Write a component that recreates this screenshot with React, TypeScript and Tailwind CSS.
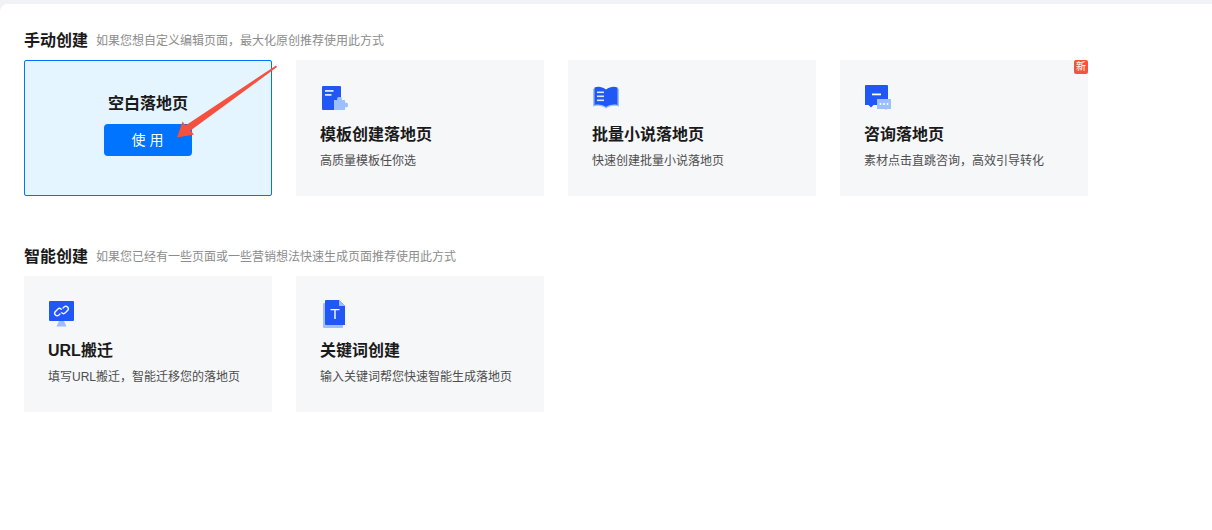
const font = { fontFamily: '"Liberation Sans","Noto Sans CJK SC",sans-serif' };

function IconTemplate() {
  return (
    <svg width="28" height="28" viewBox="0 0 28 28" className="block overflow-visible">
      <rect x="2" y="1" width="19" height="24" rx="1" fill="#2158f5" />
      <rect x="5" y="5" width="8.500" height="1.800" fill="#dbe6ff" />
      <rect x="5" y="9" width="6.500" height="1.800" fill="#dbe6ff" />
      <g fill="#9cc0ff">
        <rect x="14" y="15" width="11" height="10" />
        <rect x="17" y="12" width="5" height="4" rx="2" />
        <rect x="24" y="17.500" width="4" height="5" rx="2" />
      </g>
    </svg>
  );
}
function IconBook() {
  return (
    <svg width="28" height="26" viewBox="0 0 28 26" className="block overflow-visible">
      <path d="M1 4C5 2 9 2.500 14 5.500 19 2.500 23 2 27 4V21.500C22 20 18 20.500 14 23.500 10 20.500 6 20 1 21.500Z" fill="#9cc0ff" />
      <path d="M2.500 2.500C6 1 10 1.500 14 4.500 18 1.500 22 1 25.500 2.500V20C22 19 18 19.500 14 22 10 19.500 6 19 2.500 20Z" fill="#2158f5" />
      <rect x="5" y="6.500" width="7" height="1.600" fill="#dbe6ff" />
      <rect x="5" y="10.500" width="7" height="1.600" fill="#dbe6ff" />
      <rect x="5" y="14.500" width="7" height="1.600" fill="#dbe6ff" />
    </svg>
  );
}
function IconChat() {
  return (
    <svg width="28" height="26" viewBox="0 0 28 26" className="block overflow-visible">
      <path d="M2 0h21a1 1 0 0 1 1 1v19H9.500L7 22.500 4.500 20H1V1a1 1 0 0 1 1-1Z" fill="#2158f5" />
      <rect x="8" y="8.500" width="9" height="1.800" fill="#fff" />
      <path d="M13 14h14v10h-4l-1 1-1-1h-8Z" fill="#9cc0ff" />
      <circle cx="16.500" cy="19" r="1" fill="#fff" />
      <circle cx="20" cy="19" r="1" fill="#fff" />
      <circle cx="23.500" cy="19" r="1" fill="#fff" />
    </svg>
  );
}
function IconLink() {
  return (
    <svg width="28" height="28" viewBox="0 0 28 28" className="block overflow-visible">
      <path d="M11 20h5l2.500 5.500H8.500Z" fill="#9cc0ff" />
      <rect x="1" y="0" width="25" height="20" rx="1" fill="#2158f5" />
      <g fill="none" stroke="#f2f6ff" strokeWidth="1.400" strokeLinecap="round">
        <path d="M12 13l-1.300 1.200a2.500 2.500 0 0 1-3.500-3.500L9.700 8.200a2.500 2.500 0 0 1 3.500 0" />
        <path d="M15 7l1.300-1.200a2.500 2.500 0 0 1 3.500 3.500L17.300 11.800a2.500 2.500 0 0 1-3.500 0" />
      </g>
    </svg>
  );
}
function IconDoc() {
  return (
    <svg width="28" height="28" viewBox="0 0 28 28" className="block overflow-visible">
      <rect x="3" y="2" width="20" height="25" rx="1" fill="#9cc0ff" />
      <path d="M6 -1h13l6 6v19H6a1 1 0 0 1-1-1V0a1 1 0 0 1 1-1Z" fill="#2158f5" />
      <path d="M19 -1l6 6h-6Z" fill="#9cc0ff" />
      <path d="M10.500 8h9v1.300h-3.800V18h-1.400V9.300h-3.800Z" fill="#fff" />
    </svg>
  );
}

function Card({ icon, title, desc, badge }: { icon: React.ReactNode; title: string; desc: string; badge?: boolean }) {
  return (
    <div className="relative flex h-[136px] w-[248px] flex-col bg-[#f6f7f9] px-6 pt-[25px]">
      {badge && (
        <span className="absolute right-0 top-0 flex h-[14px] w-[14px] items-center justify-center rounded-[2px] bg-[#f9523b] text-[10px] leading-none text-white">
          新
        </span>
      )}
      <div className="h-7">{icon}</div>
      <div className="mt-[10px] text-base font-bold leading-[24px] text-[#1a1a1a]">{title}</div>
      <div className="mt-[4px] text-xs leading-[20px] text-[#4d4d4d]">{desc}</div>
    </div>
  );
}

function Heading({ title, desc }: { title: string; desc: string }) {
  return (
    <div className="flex h-10 items-center gap-2 pt-[1px]">
      <span className="text-base font-bold text-[#1a1a1a]">{title}</span>
      <span className="text-xs text-[#8c8c8c]">{desc}</span>
    </div>
  );
}

export default function App() {
  return (
    <div className="h-[530px] w-[1212px] overflow-hidden bg-[#f0f2f5] pt-1" style={font}>
      <div className="relative h-full rounded-tl-lg bg-white px-6 pt-4">
        <Heading title="手动创建" desc="如果您想自定义编辑页面，最大化原创推荐使用此方式" />
        <div className="flex gap-6">
          <div className="flex h-[136px] w-[248px] flex-col items-center rounded-[2px] border border-[#0073ff] bg-[#e4f5ff] pt-[31px]">
            <div className="text-base font-bold leading-[24px] text-[#1a1a1a]">空白落地页</div>
            <button className="mt-[8px] h-8 w-[88px] rounded-[4px] bg-[#0073ff] pl-[3px] text-sm tracking-[4px] text-white">使用</button>
          </div>
          <Card icon={<IconTemplate />} title="模板创建落地页" desc="高质量模板任你选" />
          <Card icon={<IconBook />} title="批量小说落地页" desc="快速创建批量小说落地页" />
          <Card icon={<IconChat />} title="咨询落地页" desc="素材点击直跳咨询，高效引导转化" badge />
        </div>
        <div className="mt-10">
          <Heading title="智能创建" desc="如果您已经有一些页面或一些营销想法快速生成页面推荐使用此方式" />
        </div>
        <div className="flex gap-6">
          <Card icon={<IconLink />} title="URL搬迁" desc="填写URL搬迁，智能迁移您的落地页" />
          <Card icon={<IconDoc />} title="关键词创建" desc="输入关键词帮您快速智能生成落地页" />
        </div>
        <svg className="absolute left-[170px] top-[56px]" width="112" height="84" viewBox="170 60 112 84">
          <path d="M177 137.500L182.500 121.500 185.500 125.500 276 65.500 277 67 190.500 130.500 194 134.500Z" fill="#f4513f" />
        </svg>
      </div>
    </div>
  );
}
